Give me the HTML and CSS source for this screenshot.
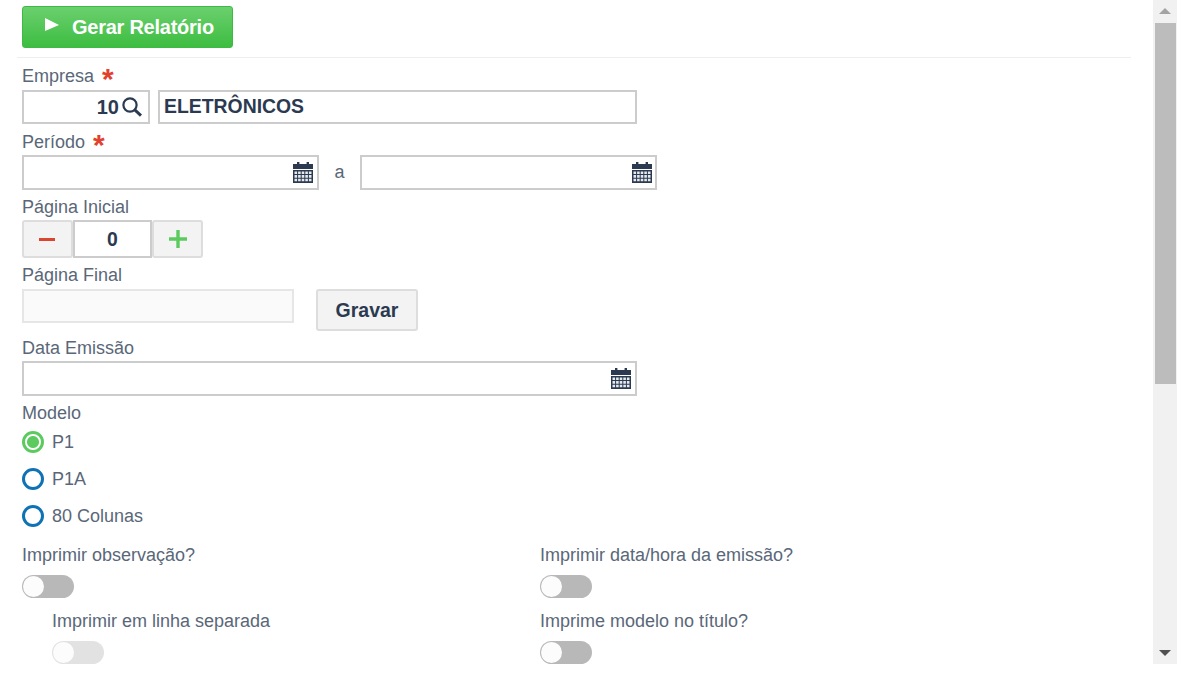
FILE: index.html
```html
<!DOCTYPE html>
<html lang="pt-BR">
<head>
<meta charset="utf-8">
<title>Gerar Relatório</title>
<link rel="stylesheet" href="styles.css">
</head>
<body>
<div class="window">
  <main class="content">
    <div class="toolbar">
      <button class="btn-primary" type="button">
        <svg class="play" width="16" height="16" viewBox="0 0 16 16"><path d="M1 1 L15 8 L1 14 Z" fill="#fff"/></svg>
        <span>Gerar Relatório</span>
      </button>
    </div>
    <form class="form">
      <div class="field first">
        <label class="label">Empresa <span class="req">*</span></label>
        <div class="row">
          <div class="box code"><span class="code-value">10</span>
            <svg class="search" width="20" height="20" viewBox="0 0 20 20"><circle cx="8" cy="8" r="6.6" fill="none" stroke="#2b3a50" stroke-width="2.2"/><path d="M12.6 12.6 L19 18.6" stroke="#2b3a50" stroke-width="3"/></svg>
          </div>
          <div class="box name"><span class="name-text">ELETRÔNICOS</span></div>
        </div>
      </div>
      <div class="field periodo">
        <label class="label">Período <span class="req">*</span></label>
        <div class="row center">
          <div class="box date w-date">
            <svg class="cal" width="20" height="21" viewBox="0 0 20 21"><use href="#cal"/></svg>
          </div>
          <span class="sep">a</span>
          <div class="box date w-date alt">
            <svg class="cal" width="20" height="21" viewBox="0 0 20 21"><use href="#cal"/></svg>
          </div>
        </div>
      </div>
      <div class="field">
        <label class="label">Página Inicial</label>
        <div class="stepper">
          <span class="step"><i class="minus"></i></span>
          <span class="step-value">0</span>
          <span class="step"><svg width="18" height="18" viewBox="0 0 18 18"><path d="M9 0 V18 M0 9 H18" stroke="#5ccb5f" stroke-width="3.4"/></svg></span>
        </div>
      </div>
      <div class="field">
        <label class="label l4">Página Final</label>
        <div class="row">
          <div class="box disabled"></div>
          <button class="btn-save" type="button">Gravar</button>
        </div>
      </div>
      <div class="field">
        <label class="label">Data Emissão</label>
        <div class="box date w-wide">
          <svg class="cal" width="20" height="21" viewBox="0 0 20 21"><use href="#cal"/></svg>
        </div>
      </div>
      <div class="field">
        <label class="label">Modelo</label>
        <div class="radios">
          <div class="radio-row"><span class="radio on"></span>P1</div>
          <div class="radio-row"><span class="radio"></span>P1A</div>
          <div class="radio-row"><span class="radio"></span>80 Colunas</div>
        </div>
      </div>
      <div class="toggles">
        <div class="tcol">
          <div class="tgroup">
            <label class="label">Imprimir observação?</label>
            <span class="toggle"></span>
          </div>
          <div class="tgroup indent">
            <label class="label">Imprimir em linha separada</label>
            <span class="toggle off"></span>
          </div>
        </div>
        <div class="tcol">
          <div class="tgroup">
            <label class="label">Imprimir data/hora da emissão?</label>
            <span class="toggle"></span>
          </div>
          <div class="tgroup">
            <label class="label">Imprime modelo no título?</label>
            <span class="toggle"></span>
          </div>
        </div>
      </div>
    </form>
  </main>
  <div class="scrollbar">
    <span class="arrow up"></span>
    <span class="thumb"></span>
    <span class="arrow down"></span>
  </div>
</div>
<svg class="defs" width="0" height="0">
  <symbol id="cal" viewBox="0 0 20 21">
    <path fill="#2b3a50" d="M4 0h2.4v2H4zM13.6 0H16v2h-2.4zM0 2h20v5H0z"/>
    <path fill="#2b3a50" d="M0 8h20v13H0z"/>
    <path fill="#e6e9ee" d="M1.5 9.5h2.6v2.6H1.5zM5.1 9.5h2.6v2.6H5.1zM8.7 9.5h2.6v2.6H8.7zM12.3 9.5h2.6v2.6h-2.6zM15.9 9.5h2.6v2.6h-2.6zM1.5 13.1h2.6v2.6H1.5zM5.1 13.1h2.6v2.6H5.1zM8.7 13.1h2.6v2.6H8.7zM12.3 13.1h2.6v2.6h-2.6zM15.9 13.1h2.6v2.6h-2.6zM1.5 16.7h2.6v2.6H1.5zM5.1 16.7h2.6v2.6H5.1zM8.7 16.7h2.6v2.6H8.7zM12.3 16.7h2.6v2.6h-2.6zM15.9 16.7h2.6v2.6h-2.6z"/>
  </symbol>
</svg>
</body>
</html>
```
FILE: styles.css
```css
* { box-sizing: border-box; }
html, body { margin: 0; padding: 0; background: #fff; overflow: hidden; }
body { font-family: "Liberation Sans", Arial, sans-serif; font-size: 18px; color: #5a6779; }
.window { display: flex; height: 664px; width: 1177px; overflow: hidden; }
.content { flex: 1; min-width: 0; padding-right: 22px; }
.defs { position: absolute; }

.toolbar { margin-left: 17px; padding: 6px 0 8px 5px; border-bottom: 1px solid #eee; height: 58px; }
.btn-primary { display: flex; align-items: center; width: 211px; height: 42px; padding: 0 0 0 21px; border: 1px solid #3dba41; border-radius: 3px; background: linear-gradient(#6bd06e, #3dbd41); color: #fff; font: bold 20px "Liberation Sans", Arial, sans-serif; letter-spacing: -0.25px; }
.btn-primary span { margin-left: 12px; }
.play { margin-top: -4px; }

.form { padding-left: 22px; }
.field { margin-top: 7px; }
.field.first { margin-top: 8px; }
.field.periodo { margin-top: 8px; }
.label { display: block; height: 20px; line-height: 20px; margin-bottom: 3px; }
.first > .label { margin-bottom: 4px; }
.l4 { margin-bottom: 4px; }
.req { color: #e2412d; font-size: 30px; font-weight: bold; line-height: 20px; vertical-align: -7px; margin-left: 3px; }
.row { display: flex; align-items: flex-start; }
.row.center { align-items: center; }

.box { border: 2px solid #ccc; height: 34px; background: #fff; display: flex; align-items: center; }
.code { width: 128px; justify-content: flex-end; padding-right: 6px; font-weight: bold; font-size: 20px; color: #2b3a50; }
.search { margin-left: 3px; }
.name { width: 479px; margin-left: 8px; padding-left: 4px; font-weight: bold; font-size: 19.4px; color: #2b3a50; }
.name-text { margin-bottom: 2px; }
.date { height: 35px; justify-content: flex-end; padding-right: 4px; }
.w-date { width: 297px; }
.w-date.alt { padding-right: 3px; }
.w-wide { width: 615px; }
.sep { width: 41px; text-align: center; font-size: 18px; }
.disabled { width: 272px; background: #fafafa; border-color: #e6e6e6; }

.stepper { display: flex; height: 38px; width: 181px; }
.step { width: 51px; display: flex; align-items: center; justify-content: center; background: #f3f3f3; border: 2px solid #ddd; border-radius: 3px; }
.minus { display: block; width: 16px; height: 3px; margin-left: -2px; background: #d9452f; }
.step-value { width: 79px; border: 2px solid #ccc; display: flex; align-items: center; justify-content: center; font-weight: bold; font-size: 19.4px; color: #2b3a50; }

.btn-save { width: 102px; height: 42px; margin-left: 22px; background: #f3f3f3; border: 2px solid #ddd; border-radius: 3px; color: #2b3a50; font: bold 19.5px "Liberation Sans", Arial, sans-serif; }

.radios { margin-top: 8px; display: flex; flex-direction: column; gap: 15px; }
.radio-row { display: flex; align-items: center; height: 22px; }
.radio { width: 22px; height: 22px; border-radius: 50%; border: 3px solid #0f72b5; margin-right: 8px; background: #fff; }
.radio.on { border-color: #5ccb5f; background: radial-gradient(circle, #5ccb5f 0 5.5px, #fff 6.5px); }

.toggles { display: flex; margin-top: 18px; }
.tcol { width: 518px; display: flex; flex-direction: column; gap: 13px; }
.tgroup.indent { padding-left: 30px; }
.toggles .label { margin-bottom: 10px; }
.toggle { display: block; position: relative; width: 52px; height: 23px; border-radius: 12px; background: #b8b8b8; }
.toggle::before { content: ""; position: absolute; left: 1px; top: 1px; width: 21px; height: 21px; border-radius: 50%; background: #fcfcfc; }
.toggle.off { background: #e2e2e2; }

.scrollbar { width: 24px; height: 664px; background: #f1f1f1; display: flex; flex-direction: column; align-items: center; }
.arrow { width: 0; height: 0; border-left: 6px solid transparent; border-right: 6px solid transparent; }
.arrow.up { margin-top: 8px; border-bottom: 6px solid #a3a3a3; }
.thumb { width: 21px; height: 361px; background: #bcbcbc; margin-top: 9px; margin-left: 1px; }
.arrow.down { margin-top: auto; margin-bottom: 8px; border-top: 6px solid #505050; }
```
